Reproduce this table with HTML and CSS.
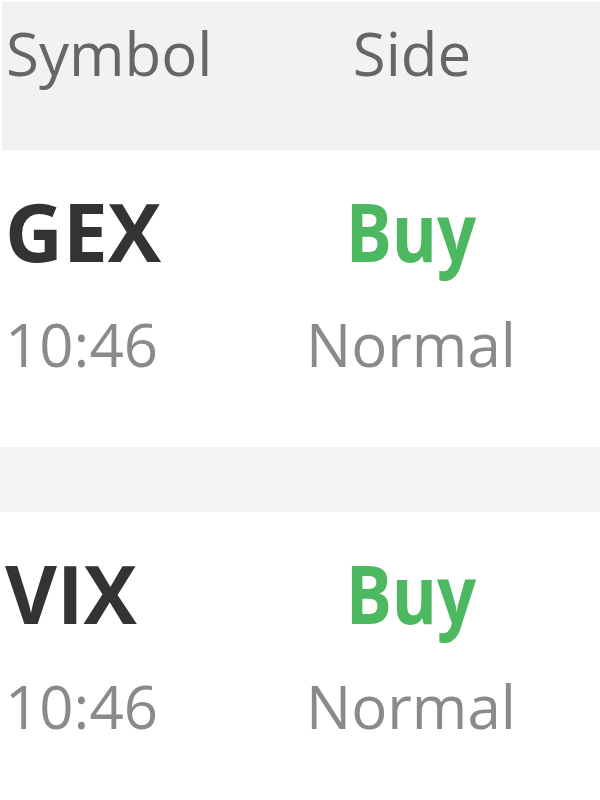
FILE: index.html
```html
<!DOCTYPE html>
<html>
<head>
<meta charset="utf-8">
<link rel="stylesheet" href="styles.css">
</head>
<body>
<div class="table">
  <div class="header">
    <div class="col1">Symbol</div>
    <div class="col2">Side</div>
  </div>
  <div class="row">
    <div class="col1">
      <div class="sym">GEX</div>
      <div class="sub">10:46</div>
    </div>
    <div class="col2">
      <div class="side"><span class="side-text">Buy</span></div>
      <div class="sub">Normal</div>
    </div>
  </div>
  <div class="sep"></div>
  <div class="row">
    <div class="col1">
      <div class="sym">VIX</div>
      <div class="sub">10:46</div>
    </div>
    <div class="col2">
      <div class="side"><span class="side-text">Buy</span></div>
      <div class="sub">Normal</div>
    </div>
  </div>
</div>
</body>
</html>
```
FILE: styles.css
```css
html, body {
  margin: 0;
  padding: 0;
  background: #ffffff;
  font-family: "Open Sans", "Liberation Sans", sans-serif;
}
.table {
  width: 600px;
  padding-top: 2px;
}
.header, .row {
  display: grid;
  grid-template-columns: 222px 1fr;
}
.header {
  background: #f2f2f2;
  color: #666666;
  font-size: 60px;
  line-height: 84px;
  padding: 9px 0 55px;
  margin-left: 2px;
}
.col1 {
  padding-left: 5px;
}
.col2 {
  text-align: center;
}
.header .col1 { padding-left: 4px; }
.row {
  padding: 33px 0 67px;
}
.sym, .side {
  font-size: 80px;
  font-weight: 700;
  line-height: 96px;
  color: #333333;
  margin-bottom: 29px;
}
.side {
  color: #4cb860;
}
.side-text {
  display: inline-block;
  transform: scaleX(0.86);
}
.sub {
  font-size: 60px;
  line-height: 72px;
  color: #8a8a8a;
}
.sep {
  height: 65px;
  background: #f4f4f4;
}
```
